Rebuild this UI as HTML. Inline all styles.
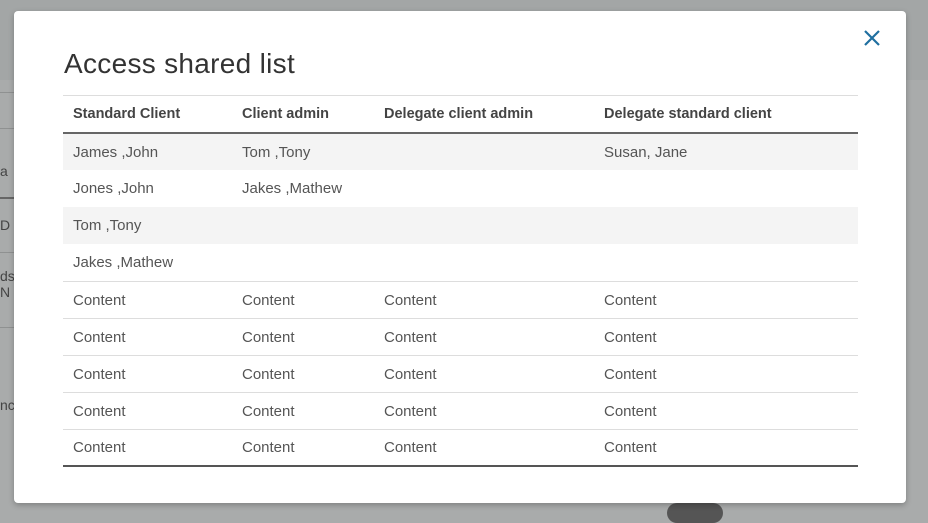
<!DOCTYPE html>
<html><head><style>
body{margin:0;width:928px;height:516px;background:#a9abab;position:relative;overflow:hidden;font-family:"Liberation Sans",sans-serif;}
.top{position:absolute;left:0;top:0;width:928px;height:80px;background:#a3a6a6}
.bgl{position:absolute;left:0;width:14px;height:1px;background:#8f9191}
.modal{position:absolute;left:14px;top:11px;width:892px;height:492px;background:#fff;border-radius:4px;box-shadow:0 2px 6px rgba(0,0,0,.25)}
h1{position:absolute;left:50px;top:37px;margin:0;font-weight:normal;font-size:28px;color:#333;letter-spacing:.3px}
.x{position:absolute;left:848px;top:17px}
table{position:absolute;left:49px;top:84px;width:795px;border-collapse:collapse;font-size:15px;color:#555;border-top:1px solid #ddd;border-bottom:2px solid #555}
th{text-align:left;font-weight:bold;color:#444;height:36px;padding:0 10px;border-bottom:2px solid #666;font-size:14.5px}
td{height:37px;padding:0 10px;}
tr.f td{height:36px}
tr.g td{background:#f4f4f4}
tr.b td{border-top:1px solid #ddd;height:36px}
tr.l td{height:35px}
</style></head><body>
<div class="top"></div>
<div class="bgl" style="top:92px"></div><div class="bgl" style="top:128px"></div><div class="bgl" style="top:197px;height:2px;background:#666"></div><div class="bgl" style="top:252px"></div><div class="bgl" style="top:327px"></div>
<div style="position:absolute;left:0;top:163px;font-size:14px;color:#444">a</div>
<div style="position:absolute;left:0;top:217px;font-size:14px;color:#444">D</div>
<div style="position:absolute;left:0;top:268px;font-size:14px;color:#444">ds<br>N</div>
<div style="position:absolute;left:0;top:397px;font-size:14px;color:#444">nc</div>
<div style="position:absolute;left:667px;top:503px;width:56px;height:20px;border-radius:10px;background:#555"></div>
<div class="modal">
<h1>Access shared list</h1>
<svg class="x" width="20" height="20" viewBox="0 0 20 20"><path d="M3 3L17 17M17 3L3 17" stroke="#1f6fa0" stroke-width="2.2"/></svg>
<table>
<tr><th style="width:149px">Standard Client</th><th style="width:122px">Client admin</th><th style="width:200px">Delegate client admin</th><th>Delegate standard client</th></tr>
<tr class="g f"><td>James ,John</td><td>Tom ,Tony</td><td></td><td>Susan, Jane</td></tr>
<tr><td>Jones ,John</td><td>Jakes ,Mathew</td><td></td><td></td></tr>
<tr class="g"><td>Tom ,Tony</td><td></td><td></td><td></td></tr>
<tr><td>Jakes ,Mathew</td><td></td><td></td><td></td></tr>
<tr class="b"><td>Content</td><td>Content</td><td>Content</td><td>Content</td></tr>
<tr class="b"><td>Content</td><td>Content</td><td>Content</td><td>Content</td></tr>
<tr class="b"><td>Content</td><td>Content</td><td>Content</td><td>Content</td></tr>
<tr class="b"><td>Content</td><td>Content</td><td>Content</td><td>Content</td></tr>
<tr class="b l"><td>Content</td><td>Content</td><td>Content</td><td>Content</td></tr>
</table>
</div>
</body></html>
